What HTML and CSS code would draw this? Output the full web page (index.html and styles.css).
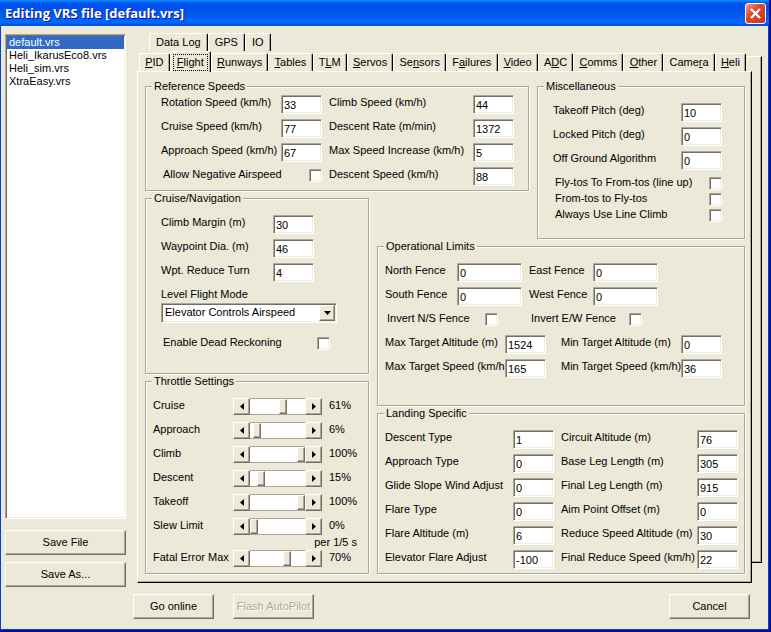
FILE: index.html
```html
<!DOCTYPE html>
<html lang="en">
<head>
  <meta charset="UTF-8" />
  <meta name="viewport" content="width=device-width, initial-scale=1" />
  <title>Editing VRS file [default.vrs]</title>
  <link rel="stylesheet" href="styles.css">
</head>
<body>
  <div class="window">
    <header class="titlebar">
      <h1>Editing VRS file [default.vrs]</h1>
      <button class="close" type="button" aria-label="Close">
        <svg width="13" height="13" viewBox="0 0 13 13"><path d="M2 2L11 11M11 2L2 11" stroke="#fff" stroke-width="2.4" /></svg>
      </button>
    </header>

    <form class="client">
      <div class="main">
        <aside class="files">
          <ul class="listbox" role="listbox" aria-label="VRS files">
            <li role="option" aria-selected="true" class="selected">default.vrs</li>
            <li role="option" aria-selected="false">Heli_IkarusEco8.vrs</li>
            <li role="option" aria-selected="false">Heli_sim.vrs</li>
            <li role="option" aria-selected="false">XtraEasy.vrs</li>
          </ul>
          <button class="btn" type="button">Save File</button>
          <button class="btn" type="button">Save As...</button>
        </aside>

        <section class="notebook">
          <div class="tabs tabs-back">
            <button class="tab" type="button">Data Log</button>
            <button class="tab" type="button">GPS</button>
            <button class="tab" type="button">IO</button>
          </div>
          <div class="tabs tabs-front">
            <button class="tab" type="button"><u>P</u>ID</button>
            <button class="tab active" type="button"><span><u>F</u>light</span></button>
            <button class="tab" type="button"><u>R</u>unways</button>
            <button class="tab" type="button"><u>T</u>ables</button>
            <button class="tab" type="button">T<u>L</u>M</button>
            <button class="tab" type="button"><u>S</u>ervos</button>
            <button class="tab" type="button">Se<u>n</u>sors</button>
            <button class="tab" type="button">F<u>a</u>ilures</button>
            <button class="tab" type="button"><u>V</u>ideo</button>
            <button class="tab" type="button">A<u>D</u>C</button>
            <button class="tab" type="button"><u>C</u>omms</button>
            <button class="tab" type="button"><u>O</u>ther</button>
            <button class="tab" type="button">Came<u>r</u>a</button>
            <button class="tab" type="button"><u>H</u>eli</button>
          </div>

          <div class="pages">
            <div class="page">
              <fieldset class="reference">
                <legend>Reference Speeds</legend>
                <div class="pairs">
                  <label class="field">Rotation Speed (km/h)<input type="text" value="33"></label>
                  <label class="field">Climb Speed (km/h)<input type="text" value="44"></label>
                  <label class="field">Cruise Speed (km/h)<input type="text" value="77"></label>
                  <label class="field">Descent Rate (m/min)<input type="text" value="1372"></label>
                  <label class="field">Approach Speed (km/h)<input type="text" value="67"></label>
                  <label class="field">Max Speed Increase (km/h)<input type="text" value="5"></label>
                  <label class="field check">Allow Negative Airspeed<input type="checkbox"></label>
                  <label class="field">Descent Speed (km/h)<input type="text" value="88"></label>
                </div>
              </fieldset>

              <fieldset class="misc">
                <legend>Miscellaneous</legend>
                <label class="field">Takeoff Pitch (deg)<input type="text" value="10"></label>
                <label class="field">Locked Pitch (deg)<input type="text" value="0"></label>
                <label class="field">Off Ground Algorithm<input type="text" value="0"></label>
                <label class="field check tight">Fly-tos To From-tos (line up)<input type="checkbox"></label>
                <label class="field check tight">From-tos to Fly-tos<input type="checkbox"></label>
                <label class="field check tight">Always Use Line Climb<input type="checkbox"></label>
              </fieldset>

              <fieldset class="cruise">
                <legend>Cruise/Navigation</legend>
                <label class="field">Climb Margin (m)<input type="text" value="30"></label>
                <label class="field">Waypoint Dia. (m)<input type="text" value="46"></label>
                <label class="field">Wpt. Reduce Turn<input type="text" value="4"></label>
                <label class="combo-label" for="flightMode">Level Flight Mode</label>
                <div class="combo">
                  <select id="flightMode">
                    <option>Elevator Controls Airspeed</option>
                  </select>
                  <span class="combo-arrow"><svg width="7" height="4" viewBox="0 0 7 4"><path d="M0 0H7L3.5 4Z" /></svg></span>
                </div>
                <label class="field check">Enable Dead Reckoning<input type="checkbox"></label>
              </fieldset>

              <fieldset class="limits">
                <legend>Operational Limits</legend>
                <div class="pairs fences">
                  <label class="field wide">North Fence<input type="text" value="0"></label>
                  <label class="field wide">East Fence<input type="text" value="0"></label>
                  <label class="field wide">South Fence<input type="text" value="0"></label>
                  <label class="field wide">West Fence<input type="text" value="0"></label>
                </div>
                <div class="pairs inverts">
                  <label class="field check">Invert N/S Fence<input type="checkbox"></label>
                  <label class="field check">Invert E/W Fence<input type="checkbox"></label>
                </div>
                <div class="pairs targets">
                  <label class="field">Max Target Altitude (m)<input type="text" value="1524"></label>
                  <label class="field">Min Target Altitude (m)<input type="text" value="0"></label>
                  <label class="field">Max Target Speed (km/h)<input type="text" value="165"></label>
                  <label class="field">Min Target Speed (km/h)<input type="text" value="36"></label>
                </div>
              </fieldset>

              <fieldset class="throttle">
                <legend>Throttle Settings</legend>
                <div class="slider">
                  <label for="thCruise">Cruise</label>
                  <div class="scroll">
                    <button type="button" aria-label="Less"><svg width="4" height="7" viewBox="0 0 4 7"><path d="M4 0V7L0 3.5Z" /></svg></button>
                    <input type="range" id="thCruise" value="61">
                    <button type="button" aria-label="More"><svg width="4" height="7" viewBox="0 0 4 7"><path d="M0 0V7L4 3.5Z" /></svg></button>
                  </div>
                  <output>61%</output>
                </div>
                <div class="slider">
                  <label for="thApproach">Approach</label>
                  <div class="scroll">
                    <button type="button" aria-label="Less"><svg width="4" height="7" viewBox="0 0 4 7"><path d="M4 0V7L0 3.5Z" /></svg></button>
                    <input type="range" id="thApproach" value="6">
                    <button type="button" aria-label="More"><svg width="4" height="7" viewBox="0 0 4 7"><path d="M0 0V7L4 3.5Z" /></svg></button>
                  </div>
                  <output>6%</output>
                </div>
                <div class="slider">
                  <label for="thClimb">Climb</label>
                  <div class="scroll">
                    <button type="button" aria-label="Less"><svg width="4" height="7" viewBox="0 0 4 7"><path d="M4 0V7L0 3.5Z" /></svg></button>
                    <input type="range" id="thClimb" value="100">
                    <button type="button" aria-label="More"><svg width="4" height="7" viewBox="0 0 4 7"><path d="M0 0V7L4 3.5Z" /></svg></button>
                  </div>
                  <output>100%</output>
                </div>
                <div class="slider">
                  <label for="thDescent">Descent</label>
                  <div class="scroll">
                    <button type="button" aria-label="Less"><svg width="4" height="7" viewBox="0 0 4 7"><path d="M4 0V7L0 3.5Z" /></svg></button>
                    <input type="range" id="thDescent" value="15">
                    <button type="button" aria-label="More"><svg width="4" height="7" viewBox="0 0 4 7"><path d="M0 0V7L4 3.5Z" /></svg></button>
                  </div>
                  <output>15%</output>
                </div>
                <div class="slider">
                  <label for="thTakeoff">Takeoff</label>
                  <div class="scroll">
                    <button type="button" aria-label="Less"><svg width="4" height="7" viewBox="0 0 4 7"><path d="M4 0V7L0 3.5Z" /></svg></button>
                    <input type="range" id="thTakeoff" value="100">
                    <button type="button" aria-label="More"><svg width="4" height="7" viewBox="0 0 4 7"><path d="M0 0V7L4 3.5Z" /></svg></button>
                  </div>
                  <output>100%</output>
                </div>
                <div class="slider slew">
                  <label for="thSlew">Slew Limit</label>
                  <div class="scroll">
                    <button type="button" aria-label="Less"><svg width="4" height="7" viewBox="0 0 4 7"><path d="M4 0V7L0 3.5Z" /></svg></button>
                    <input type="range" id="thSlew" value="0">
                    <button type="button" aria-label="More"><svg width="4" height="7" viewBox="0 0 4 7"><path d="M0 0V7L4 3.5Z" /></svg></button>
                  </div>
                  <output>0%</output>
                </div>
                <p class="unit">per 1/5 s</p>
                <div class="slider">
                  <label for="thFatal">Fatal Error Max</label>
                  <div class="scroll">
                    <button type="button" aria-label="Less"><svg width="4" height="7" viewBox="0 0 4 7"><path d="M4 0V7L0 3.5Z" /></svg></button>
                    <input type="range" id="thFatal" value="70">
                    <button type="button" aria-label="More"><svg width="4" height="7" viewBox="0 0 4 7"><path d="M0 0V7L4 3.5Z" /></svg></button>
                  </div>
                  <output>70%</output>
                </div>
              </fieldset>

              <fieldset class="landing">
                <legend>Landing Specific</legend>
                <div class="pairs">
                  <label class="field">Descent Type<input type="text" value="1"></label>
                  <label class="field">Circuit Altitude (m)<input type="text" value="76"></label>
                  <label class="field">Approach Type<input type="text" value="0"></label>
                  <label class="field">Base Leg Length (m)<input type="text" value="305"></label>
                  <label class="field">Glide Slope Wind Adjust<input type="text" value="0"></label>
                  <label class="field">Final Leg Length (m)<input type="text" value="915"></label>
                  <label class="field">Flare Type<input type="text" value="0"></label>
                  <label class="field">Aim Point Offset (m)<input type="text" value="0"></label>
                  <label class="field">Flare Altitude (m)<input type="text" value="6"></label>
                  <label class="field">Reduce Speed Altitude (m)<input type="text" value="30"></label>
                  <label class="field">Elevator Flare Adjust<input type="text" value="-100"></label>
                  <label class="field">Final Reduce Speed (km/h)<input type="text" value="22"></label>
                </div>
              </fieldset>
            </div>
            <div class="back-page"></div>
          </div>
        </section>
      </div>

      <footer class="actions">
        <button class="btn" type="button">Go online</button>
        <button class="btn" type="button" disabled>Flash AutoPilot</button>
        <button class="btn cancel" type="button">Cancel</button>
      </footer>
    </form>
  </div>
</body>
</html>
```
FILE: styles.css
```css
* {
  box-sizing: border-box;
}
body {
  margin: 0;
  font-family: "Liberation Sans", Arial, sans-serif;
  font-size: 11px;
  line-height: 15px;
  color: #000;
  background: #ece9d8;
}
button, input, select {
  margin: 0;
  font: inherit;
  color: inherit;
}
.window {
  display: flex;
  flex-direction: column;
  min-height: 100vh;
  border-right: 2px solid #00138c;
  border-bottom: 2px solid #00138c;
}

/* title bar */
.titlebar {
  display: flex;
  align-items: center;
  justify-content: space-between;
  height: 26px;
  padding: 0 3px 0 5px;
  background: linear-gradient(#0997ff 0, #0053ee 3px, #0050ee 8px, #0058e6 14px, #0066ff 20px, #0066ff 23px, #0048d8 26px);
}
.titlebar h1 {
  margin: 0;
  font-family: "Open Sans", "Noto Sans", sans-serif;
  font-size: 13px;
  font-weight: bold;
  color: #fff;
  text-shadow: 1px 1px #0f1089;
}
.close {
  display: flex;
  align-items: center;
  justify-content: center;
  width: 21px;
  height: 21px;
  padding: 0;
  border: 1px solid #fff;
  border-radius: 3px;
  background: linear-gradient(135deg, #f0a08a, #e0492a 40%, #c5361a);
}

/* client area */
.client {
  display: flex;
  flex-direction: column;
  flex: 1;
  gap: 7px;
  padding: 7px 5px 10px 4px;
  border: solid #0042dc;
  border-width: 0 1px 1px;
}
.main {
  display: flex;
  flex: 1;
  gap: 11px;
}
.files {
  display: flex;
  flex-direction: column;
  gap: 7px;
  width: 121px;
  padding-top: 1px;
}
.listbox {
  flex: 1;
  margin: 0 0 4px;
  padding: 1px;
  list-style: none;
  line-height: 13px;
}
.listbox li {
  padding-left: 2px;
}
.listbox .selected {
  color: #fff;
  background: #316ac5;
}

/* bevels */
.listbox, .field input, .combo select {
  border: 1px solid;
  border-color: #aca899 #fff #fff #aca899;
  box-shadow: inset 1px 1px #716f64, inset -1px -1px #f1efe2;
  background: #fff;
}
.btn, .scroll button, .combo-arrow {
  border: 1px solid;
  border-color: #fff #716f64 #716f64 #fff;
  box-shadow: inset -1px -1px #aca899;
  background: #ece9d8;
}
.btn {
  height: 25px;
  padding: 0;
  border-radius: 0;
}
.btn:disabled {
  color: #aca899;
  text-shadow: 1px 1px #fff;
}

/* tabs */
.notebook {
  display: flex;
  flex-direction: column;
  flex: 1;
  margin: 0 1px 4px 0;
}
.tabs {
  display: flex;
}
.tabs-back {
  margin: 0 12px 2px;
}
.tabs-front {
  margin: 0 16px 0 2px;
}
.tab {
  height: 18px;
  padding: 0 6px;
  border: 1px solid;
  border-color: #fff #000 transparent #fff;
  border-bottom: 0;
  border-radius: 2px 2px 0 0;
  box-shadow: inset -1px 0 #aca899;
  background: #ece9d8;
  white-space: nowrap;
}
.tabs-front .tab {
  flex: 1 1 auto;
  padding: 0 2px;
}
.tabs-front .active {
  z-index: 2;
  height: 21px;
  margin: -2px 0 -1px;
}
.active span {
  display: block;
  border: 1px dotted #000;
}
.pages {
  display: flex;
  flex: 1;
}
.page {
  position: relative;
  z-index: 1;
  flex: 1;
  display: grid;
  grid-template-columns: 224fr 152fr 208fr;
  grid-template-rows: 105fr 41fr 129fr 25fr 161fr;
  gap: 7px 8px;
  padding: 14px 6px 8px 7px;
  border: 1px solid;
  border-color: #fff #000 #000 #fff;
  box-shadow: inset -1px -1px #aca899;
  background: #ece9d8;
}
.back-page {
  width: 16px;
  margin: -15px 0 20px -6px;
  border: 1px solid;
  border-color: #fff #000 #000;
  border-left: 0;
  box-shadow: inset -1px -1px #aca899;
}

/* groups */
fieldset {
  min-width: 0;
  margin: -6px 0 0;
  padding: 10px 7px 0;
  border: 1px solid #aca899;
  box-shadow: 1px 1px #fff, inset 1px 1px #fff;
}
legend {
  margin-left: -1px;
  padding: 0 2px;
  line-height: 13px;
  background: #ece9d8;
}
.reference {
  grid-area: 1 / 1 / 2 / 3;
  padding: 2px 14px 0 15px;
}
.misc {
  grid-area: 1 / 3 / 3 / 4;
  padding: 10px 22px 0 15px;
}
.cruise {
  grid-area: 2 / 1 / 4 / 2;
  padding: 10px 31px 0 15px;
}
.limits {
  grid-area: 3 / 2 / 5 / 4;
  padding-right: 22px;
}
.throttle {
  grid-area: 4 / 1 / 6 / 2;
}
.landing {
  grid-area: 5 / 2 / 6 / 4;
  padding-right: 6px;
}
.reference legend, .misc legend, .cruise legend {
  margin-left: -9px;
}

/* labelled fields */
.pairs {
  display: grid;
  gap: 5px 7px;
}
.pairs + .pairs {
  margin-top: 5px;
}
.reference .pairs {
  grid-template-columns: 161fr 185fr;
}
.landing .pairs {
  grid-template-columns: 169fr 177fr;
}
.fences {
  grid-template-columns: 137px 129px;
}
.inverts {
  grid-template-columns: 113px 113px;
  column-gap: 31px;
}
.targets {
  grid-template-columns: 1fr 1fr;
  column-gap: 15px;
}
.field {
  display: grid;
  grid-template-columns: minmax(0, 1fr) auto;
  align-items: start;
  height: 24px;
  white-space: nowrap;
}
.pairs .field {
  height: 19px;
}
.field input[type="text"] {
  width: 41px;
  height: 19px;
  padding: 1px 2px 0;
}
.wide input[type="text"] {
  width: 65px;
}
.check {
  padding-left: 2px;
}
.check input {
  appearance: none;
  width: 13px;
  height: 13px;
  margin-top: 2px;
  border-radius: 0;
}
.tight {
  height: 16px;
}
.cruise .field:not(.check) {
  width: 153px;
}
.cruise .check {
  margin-top: 12px;
  padding-right: 7px;
}
.combo-label {
  display: block;
  height: 16px;
}
.combo {
  position: relative;
}
.combo select {
  display: block;
  appearance: none;
  width: 100%;
  height: 20px;
  padding: 0 20px 0 3px;
  border-radius: 0;
}
.combo-arrow {
  position: absolute;
  top: 2px;
  right: 2px;
  display: flex;
  align-items: center;
  justify-content: center;
  width: 16px;
  height: 16px;
  pointer-events: none;
}

/* throttle scroll bars */
.slider {
  display: grid;
  grid-template-columns: 80fr 89px 39fr;
  align-items: start;
  height: 24px;
  white-space: nowrap;
}
.slider output {
  padding-left: 7px;
}
.slew, .slider:last-child {
  height: 17px;
}
.unit {
  height: 15px;
  margin: 0;
  padding-right: 4px;
  text-align: right;
}
.scroll {
  display: flex;
  height: 17px;
}
.scroll button {
  display: flex;
  align-items: center;
  justify-content: center;
  width: 17px;
  padding: 0;
}
.scroll input {
  appearance: none;
  flex: 1;
  min-width: 0;
  height: 17px;
  border: solid #aca899;
  border-width: 1px 0;
  background: #fff;
}
.scroll input::-webkit-slider-thumb {
  appearance: none;
  width: 8px;
  height: 15px;
  border: 1px solid;
  border-color: #fff #716f64 #716f64 #fff;
  box-shadow: inset -1px -1px #aca899;
  background: #ece9d8;
}

/* bottom buttons */
.actions {
  display: flex;
  gap: 19px;
  padding: 0 13px 0 128px;
}
.client .actions {
  margin-bottom: 0;
}
.actions .btn {
  width: 81px;
}
.actions .cancel {
  margin-left: auto;
}
```
